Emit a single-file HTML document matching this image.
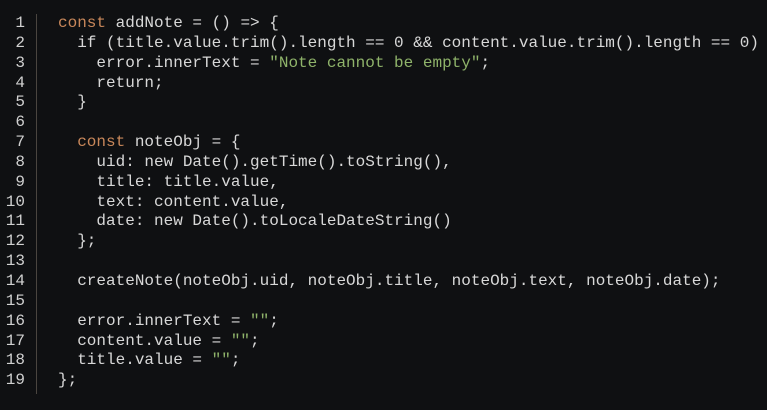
<!DOCTYPE html>
<html><head><style>
body{margin:0;background:#0f1012;width:767px;height:410px;overflow:hidden}
.g{position:absolute;left:36px;top:14px;width:1px;height:380px;background:#4a4540}
pre{position:absolute;margin:0;top:14px;font:16px/19.85px "Liberation Mono",monospace;color:#d8d8d8}
.n{left:0;width:25px;text-align:right;color:#d0d0d0}
.c{left:58px}
.k{color:#c8875a}.s{color:#8fb36a}
</style></head><body>
<div class="g"></div>
<pre class="n">1
2
3
4
5
6
7
8
9
10
11
12
13
14
15
16
17
18
19</pre>
<pre class="c"><span class="k">const</span> addNote = () =&gt; {
  if (title.value.trim().length == 0 &amp;&amp; content.value.trim().length == 0) {
    error.innerText = <span class="s">"Note cannot be empty"</span>;
    return;
  }

  <span class="k">const</span> noteObj = {
    uid: new Date().getTime().toString(),
    title: title.value,
    text: content.value,
    date: new Date().toLocaleDateString()
  };

  createNote(noteObj.uid, noteObj.title, noteObj.text, noteObj.date);

  error.innerText = <span class="s">""</span>;
  content.value = <span class="s">""</span>;
  title.value = <span class="s">""</span>;
};</pre>
</body></html>
